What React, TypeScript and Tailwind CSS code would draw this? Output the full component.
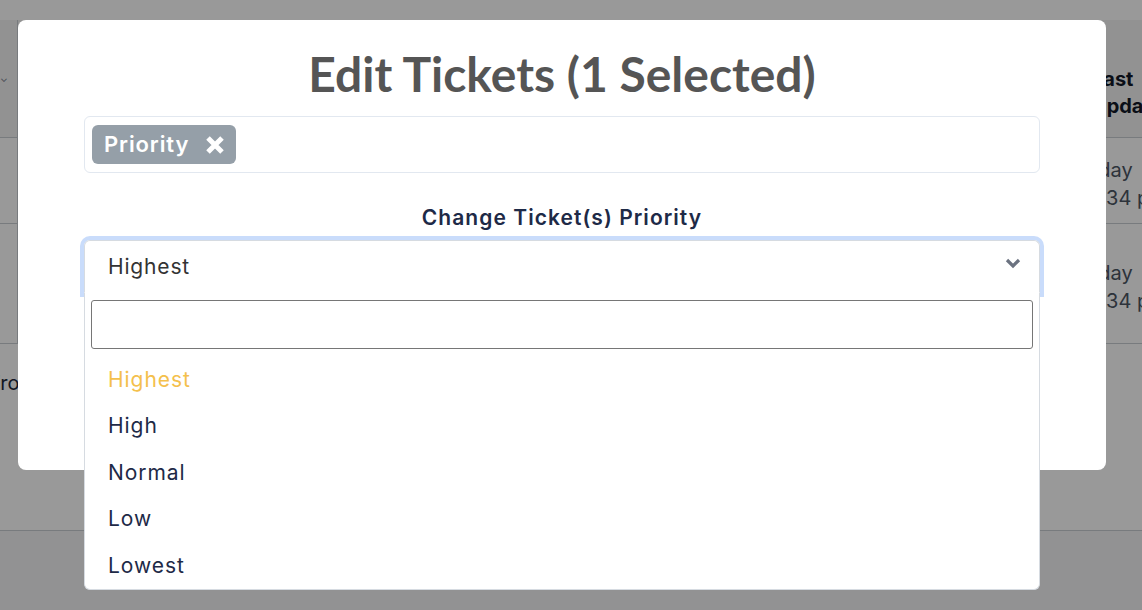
import React from "react";

const options = ["Highest", "High", "Normal", "Low", "Lowest"];

const Backdrop = () => (
  <div className="absolute inset-0 flex flex-col bg-white text-[#1f2937]">
    <div className="h-5" />
    {/* table under the modal */}
    <div className="flex flex-col">
      <div className="flex h-[118px] border-b border-[#c9cdd3] bg-[#f4f4f4]">
        <div className="flex w-[18px] items-center border-r border-[#c9cdd3] text-[10px] text-gray-500">⌄</div>
        <div className="flex-1" />
        <div className="flex w-[70px] flex-col whitespace-nowrap pl-[20px] pt-[46px] text-[20px] font-bold leading-[27px] text-[#111827]">
          <span>Last</span>
          <span>Updated</span>
        </div>
      </div>
      <div className="flex h-[86px] border-b border-[#c9cdd3]">
        <div className="w-[18px] border-r border-[#c9cdd3]" />
        <div className="flex-1" />
        <div className="flex w-[70px] flex-col whitespace-nowrap pt-[18px] text-[20px] leading-[28px] text-[#4b5563]">
          <span className="ml-[3px]">Today</span>
          <span className="ml-[8px]">12:34 pm</span>
        </div>
      </div>
      <div className="flex h-[120px] border-b border-[#c9cdd3]">
        <div className="w-[18px] border-r border-[#c9cdd3]" />
        <div className="flex-1" />
        <div className="flex w-[70px] flex-col whitespace-nowrap pt-[35px] text-[20px] leading-[28px] text-[#4b5563]">
          <span className="ml-[3px]">Today</span>
          <span className="ml-[8px]">12:34 pm</span>
        </div>
      </div>
    </div>
    <div className="h-[187px] border-b border-[#c9cdd3] pt-[24px] text-[20px] text-[#1e293b]">
      <span className="-ml-[11px]">From</span>
    </div>
    <div className="flex-1 bg-[#f3f4f6]" />
  </div>
);

export default function App() {
  return (
    <div
      className="relative h-[610px] w-[1142px] overflow-hidden"
      style={{ fontFamily: "Inter, 'Noto Sans', sans-serif" }}
    >
      <Backdrop />
      <div className="absolute inset-0 bg-black/40" />

      {/* modal */}
      <div className="absolute left-[18px] top-[20px] h-[450px] w-[1088px] rounded-lg bg-white">
        <div className="flex flex-col px-[66px] pt-[26px]">
          <h1
            className="text-center text-[48px] font-bold leading-[56px] text-[#555555]"
            style={{ fontFamily: "Lato, sans-serif" }}
          >
            Edit Tickets (1 Selected)
          </h1>

          <div className="mt-[14px] flex h-[57px] items-center rounded-md border border-[#e2e8f0] px-[7px]">
            <span className="flex h-[39px] items-center gap-[15px] rounded-md bg-[#959fa8] pl-[12px] pr-[10px] text-[22px] font-semibold tracking-[0.04em] text-white">
              Priority
              <svg width="22" height="22" viewBox="0 0 22 22" className="mt-[1px]">
                <path d="M4 4 L18 18 M18 4 L4 18" stroke="white" strokeWidth="5" strokeLinecap="butt" />
              </svg>
            </span>
          </div>

          <div className="mt-[31px] text-center text-[21px] font-semibold leading-[28px] tracking-[0.05em] text-[#1e2a47]">
            Change Ticket(s) Priority
          </div>

          <div className="relative mt-2">
            <div className="flex h-[53px] items-center justify-between rounded-t-md border border-b-transparent border-[#d6dbe1] pl-[23px] pr-[17px] shadow-[0_0_0_4px_#c9dcfb]">
              <span className="text-[21px] tracking-[0.04em] text-[#333333]">Highest</span>
              <svg width="18" height="18" viewBox="0 0 18 18" className="-mt-[8px]">
                <path d="M3 6 L9 12 L15 6" fill="none" stroke="#6b7280" strokeWidth="3.2" />
              </svg>
            </div>

            {/* open dropdown */}
            <div className="absolute left-0 right-0 top-[53px] z-10 rounded-b-md border border-t-0 border-[#d6dbe1] bg-white px-[6px] pt-[7px]">
              <input
                className="h-[49px] w-full rounded-[3px] border border-[#767676] px-3 text-[18px] outline-none"
                readOnly
              />
              <ul className="mt-[7px]">
                {options.map((o, i) => (
                  <li
                    key={o}
                    className={`flex h-[46.5px] items-center pl-[17px] text-[21px] tracking-[0.045em] ${
                      i === 0 ? "text-[#f4c04c]" : "text-[#1e2a47]"
                    }`}
                  >
                    {o}
                  </li>
                ))}
              </ul>
            </div>
          </div>
        </div>
      </div>
    </div>
  );
}
